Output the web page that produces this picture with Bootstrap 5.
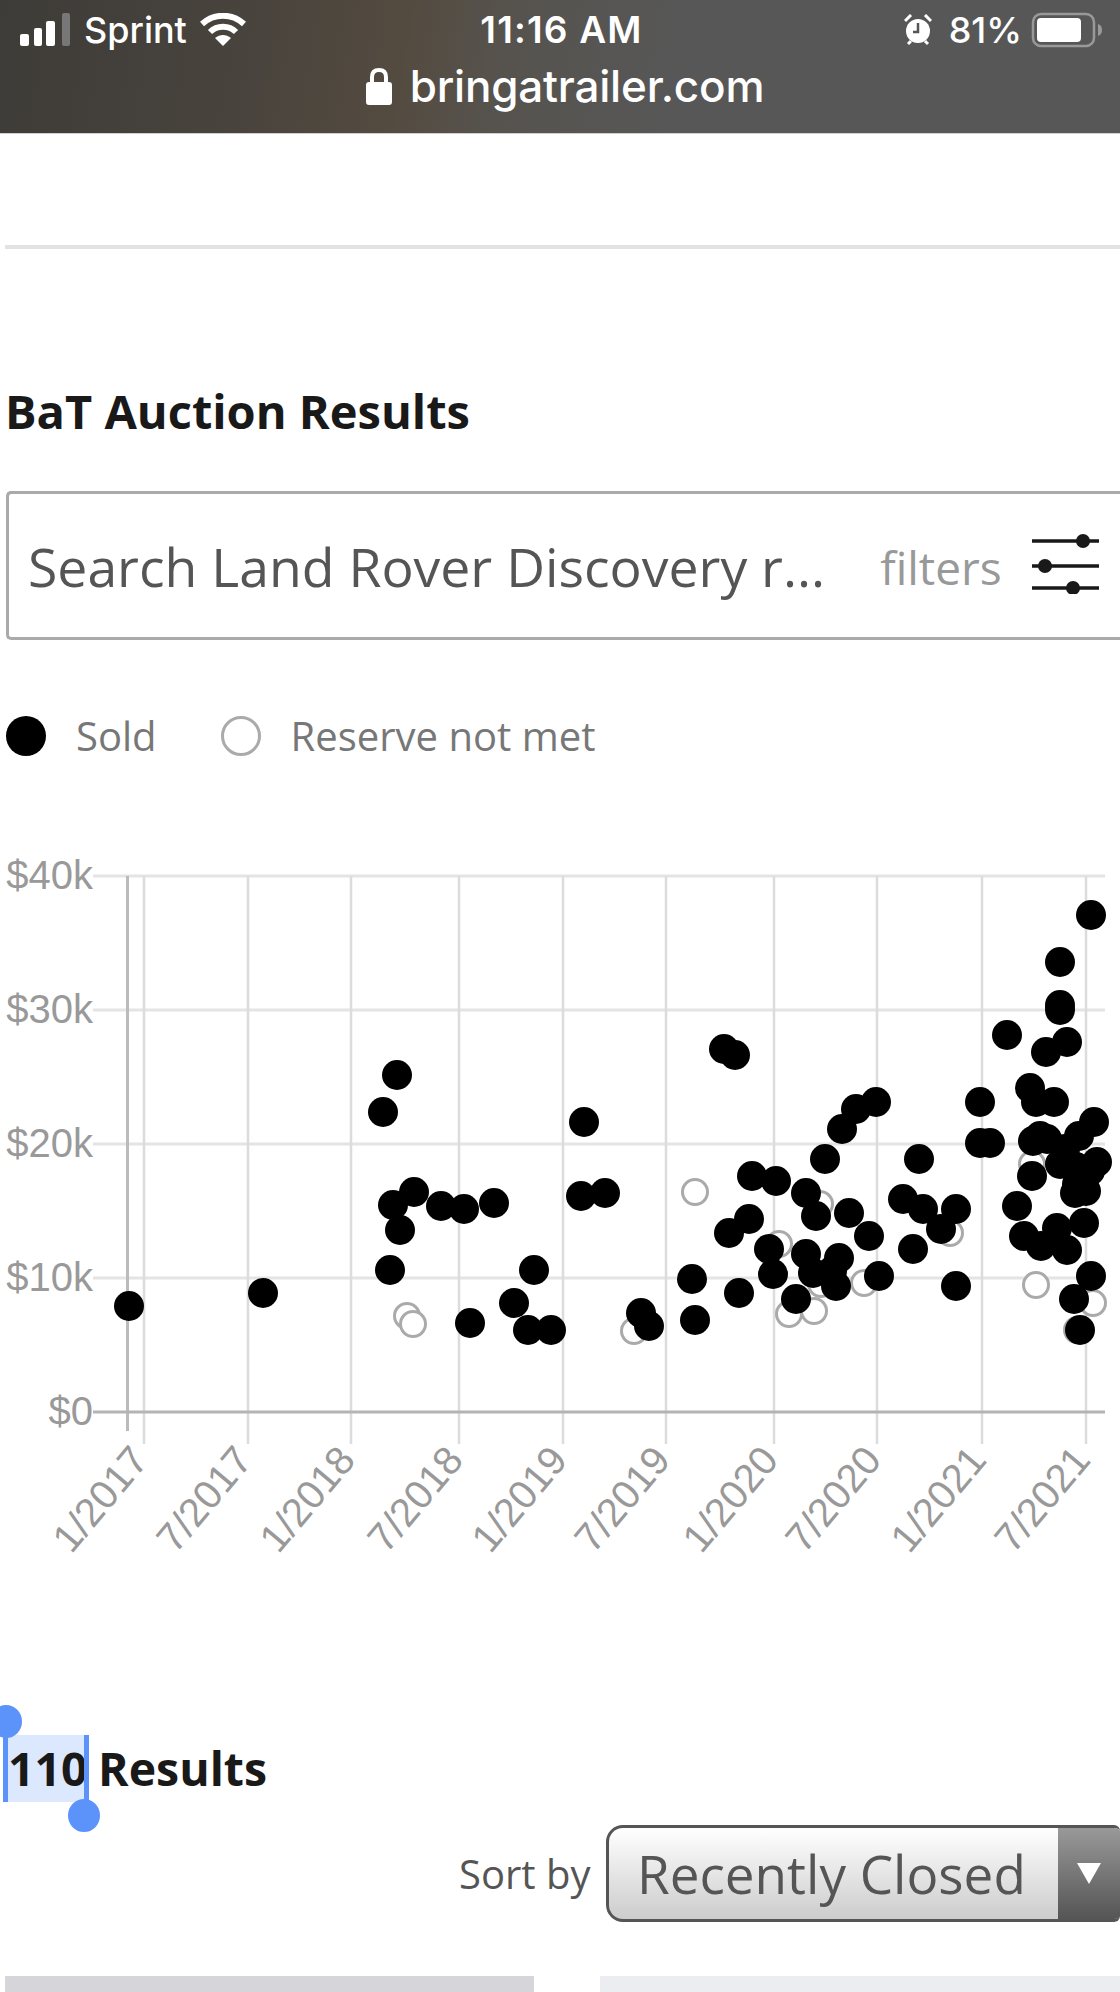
<!DOCTYPE html>
<html lang="en">
<head>
  <meta charset="UTF-8" />
  <title>BaT Auction Results</title>
  <meta name="viewport" content="width=device-width, initial-scale=1">
  <link href="https://cdn.jsdelivr.net/npm/bootstrap@5.3.3/dist/css/bootstrap.min.css" rel="stylesheet">
  <style>
    html, body { margin: 0; height: 1992px; overflow: hidden; background: #fff; }
    body { font-family: "Open Sans", sans-serif; color: #191919; }
    .status-wrap {
      height: 134px;
      color: #fff;
      font-family: Inter, sans-serif;
      background: linear-gradient(100deg, #3e3c38 0%, #48433d 22%, #544b40 36%, #56534e 45%, #575757 60%, #575757 100%);
      border-bottom: 1px solid #cfcfcf;
    }
    .status-top { height: 60px; padding: 12px 17px 0 20px; font-size: 36px; line-height: 36px; font-weight: 500; }
    .status-cell { height: 36px; }
    .carrier { margin-left: 14px; }
    .wifi-ico { margin-left: 13px; }
    .clock { font-weight: 600; font-size: 37px; letter-spacing: 1.2px; }
    .pct { margin: 0 9px 0 17px; }
    .url-row { padding-left: 10px; font-size: 44px; line-height: 52px; font-weight: 500; letter-spacing: -.2px; }
    .url-row svg { margin-right: 18px; }
    .top-rule { height: 4px; margin: 111px 0 0 5px; background: #e2e2e2; }
    .auction-title { margin: 134px 0 0 5px; font-size: 47px; line-height: 56px; font-weight: 700; }
    .search-bar {
      height: 149px; margin: 52px 0 0 6px; padding: 3px 0 0 19px;
      border: 3px solid #aaa; border-right: 0; border-radius: 5px 0 0 5px;
      font-size: 53.5px; color: #555; white-space: nowrap;
    }
    .filter-label { margin-left: 55px; font-size: 46px; color: #999; }
    .filter-ico { margin: 0 0 8px 30px; }
    .legend-row { margin: 75px 0 0 6px; font-size: 40px; line-height: 42px; color: #777; }
    .legend-dot { width: 40px; height: 40px; border-radius: 50%; background: #000; }
    .legend-ring { width: 40px; height: 40px; border-radius: 50%; border: 3px solid #aaa; margin-left: 64px; }
    .legend-text { margin-left: 30px; }
    .chart-box { display: block; margin-top: 88px; }
    .chart-box text { font-family: "Liberation Sans", Arial, sans-serif; font-size: 40px; fill: #999; }
    .results-row { margin: 158px 0 0 8px; font-size: 46.4px; line-height: 67px; font-weight: 700; }
    .sel-words { position: relative; display: inline-block; background: #dce8fd; margin-left: -2px; padding: 0 0 0 2px; width: 80px; }
    .sel-bar { position: absolute; top: 0; width: 5px; height: 67px; background: #5b93fb; }
    .sel-knob { position: absolute; width: 32px; height: 33px; border-radius: 50%; background: #5b93fb; }
    .sort-row { margin-top: 23px; height: 97px; padding-left: 459px; white-space: nowrap; }
    .sort-label { font-size: 40px; color: #555; width: 147px; flex-shrink: 0; }
    .sort-select {
      width: 514px; height: 97px; border: 3px solid #555; border-right: 0; border-radius: 17px 6px 6px 17px; overflow: hidden; flex-shrink: 0;
      font-size: 53px; color: #555; background: linear-gradient(#fff, #ccc);
    }
    .sort-value { width: 449px; padding-left: 28px; flex-shrink: 0; }
    .sort-arrow { flex-grow: 1; height: 100%; padding-left: 19px; background: linear-gradient(#999, #555); }
    .thumb-row { margin: 54px 0 0 5px; height: 17px; gap: 66px; }
    .thumb-a { width: 529px; background: #d6d6da; }
    .thumb-b { flex-grow: 1; background: #ecedf0; }
  </style>
</head>
<body>
  <div class="status-wrap">
    <div class="status-top row g-0">
      <div class="col-4 status-cell d-flex align-items-center">
        <svg width="50" height="34" viewBox="0 0 50 34">
          <rect x="0" y="21" width="9" height="12" rx="2" fill="#fff"/>
          <rect x="14" y="15" width="8" height="18" rx="2" fill="#fff"/>
          <rect x="26" y="8" width="9" height="25" rx="2" fill="#fff"/>
          <rect x="42" y="0" width="8" height="33" rx="2" fill="#777"/>
        </svg>
        <span class="carrier">Sprint</span>
        <svg class="wifi-ico" width="46" height="34" viewBox="0 0 46 34" fill="none" stroke="#fff" stroke-width="6">
          <path d="M2 11C14 0 32 0 44 11"/>
          <path d="M10 19C17 12 29 12 36 19"/>
          <path d="M23 33L15 25C20 21 26 21 31 25Z" fill="#fff" stroke="none"/>
        </svg>
      </div>
      <div class="col-4 status-cell text-center clock">11:16 AM</div>
      <div class="col-4 status-cell d-flex align-items-center justify-content-end">
        <svg width="28" height="32" viewBox="0 0 28 32">
          <circle cx="14" cy="17" r="12" fill="#fff"/>
          <path d="M14 9V18H9" fill="none" stroke="#555" stroke-width="2.5"/>
          <path d="M1 7L7 1M27 7L21 1M4 30L7 27M24 30L21 27" stroke="#fff" stroke-width="3"/>
        </svg>
        <span class="pct">81%</span>
        <svg width="72" height="36" viewBox="0 0 72 36">
          <rect x="2" y="2" width="61" height="32" rx="8" fill="none" stroke="#999" stroke-width="2.5"/>
          <rect x="6" y="6" width="44" height="24" rx="4" fill="#fff"/>
          <path d="M67 12C70 13 71 15 71 18C71 21 70 23 67 24Z" fill="#999"/>
        </svg>
      </div>
    </div>
    <div class="url-row d-flex align-items-center justify-content-center">
      <svg width="26" height="37" viewBox="0 0 26 37">
        <path d="M6 16V9C6 4 9 2 13 2C17 2 20 4 20 9V16" fill="none" stroke="#fff" stroke-width="4"/>
        <rect x="0" y="14" width="26" height="23" rx="3" fill="#fff"/>
      </svg>
      <span>bringatrailer.com</span>
    </div>
  </div>

  <div class="top-rule"></div>
  <h1 class="auction-title">BaT Auction Results</h1>

  <div class="search-bar d-flex align-items-center">
    <span>Search Land Rover Discovery r...</span>
    <span class="filter-label">filters</span>
    <svg class="filter-ico" width="67" height="62" viewBox="0 0 67 62">
      <g stroke="#191919" stroke-width="3.5"><path d="M0 9H67M0 34H67M0 56H67"/></g>
      <g fill="#191919"><circle cx="51" cy="9" r="7"/><circle cx="13" cy="34" r="7"/><circle cx="41" cy="56" r="7"/></g>
    </svg>
  </div>

  <div class="legend-row d-flex align-items-center">
    <span class="legend-dot"></span><span class="legend-text">Sold</span>
    <span class="legend-ring"></span><span class="legend-text">Reserve not met</span>
  </div>

  <svg id="chart" class="chart-box" width="1120" height="732" viewBox="0 844 1120 732"></svg>

  <div class="results-row">
    <span class="sel-words">110
      <span class="sel-bar" style="left:-3px"></span>
      <span class="sel-bar" style="left:78px"></span>
      <span class="sel-knob" style="left:-16px;top:-30px"></span>
      <span class="sel-knob" style="left:62px;top:64px"></span>
    </span> Results
  </div>

  <div class="sort-row d-flex align-items-center">
    <span class="sort-label">Sort by</span>
    <div class="sort-select d-flex align-items-center">
      <span class="sort-value">Recently Closed</span>
      <span class="sort-arrow d-flex align-items-center">
        <svg width="24" height="21" viewBox="0 0 24 21"><path d="M0 0H24L12 21Z" fill="#fff"/></svg>
      </span>
    </div>
  </div>

  <div class="thumb-row d-flex">
    <div class="thumb-a"></div>
    <div class="thumb-b"></div>
  </div>

  <script>
    const NS = 'http://www.w3.org/2000/svg';
    const chart = document.getElementById('chart');

    function add(tag, attrs, text) {
      const el = document.createElementNS(NS, tag);
      for (const k in attrs) el.setAttribute(k, attrs[k]);
      if (text) el.textContent = text;
      chart.appendChild(el);
    }

    // grid
    [[875, '$40k'], [1009, '$30k'], [1143, '$20k'], [1277, '$10k']].forEach(([y, label]) => {
      add('line', { x1: 93, x2: 1105, y1: y, y2: y, stroke: '#e4e4e4', 'stroke-width': 3 });
      add('text', { x: 93, y: y + 13, 'text-anchor': 'end' }, label);
    });
    add('text', { x: 93, y: 1424, 'text-anchor': 'end' }, '$0');

    const ticks = [
      [144, '1/2017'], [248, '7/2017'], [351, '1/2018'], [459, '7/2018'], [563, '1/2019'],
      [666, '7/2019'], [774, '1/2020'], [877, '7/2020'], [982, '1/2021'], [1086, '7/2021']
    ];
    add('line', { x1: 127.5, x2: 127.5, y1: 875, y2: 1430, stroke: '#bbb', 'stroke-width': 3 });
    ticks.forEach(([x, label]) => {
      add('line', { x1: x, x2: x, y1: 875, y2: 1443, stroke: '#dcdcdc', 'stroke-width': 2.5 });
      add('text', { x: x + 6, y: 1460, 'text-anchor': 'end', transform: `rotate(-50 ${x + 6} 1460)` }, label);
    });
    add('line', { x1: 93, x2: 1105, y1: 1411, y2: 1411, stroke: '#b4b4b4', 'stroke-width': 3 });

    // reserve not met
    [[695,1191],[407,1315],[413,1323],[634,1330],[779,1243],[820,1203],[789,1313],[814,1310],[821,1283],
     [864,1282],[950,1232],[1036,1284],[1093,1302],[1077,1329],[1032,1163]].forEach(([x, y]) => {
      add('circle', { cx: x, cy: y, r: 12.5, fill: '#fff', stroke: '#aaa', 'stroke-width': 3 });
    });

    // sold
    [[129,1305],[263,1292],[390,1269],[397,1074],[383,1111],[393,1204],[414,1191],[400,1229],[441,1205],[464,1208],[494,1202],
     [470,1322],[534,1269],[514,1302],[528,1329],[551,1329],[581,1195],[605,1192],[641,1312],[649,1325],
     [692,1278],[695,1319],[739,1292],[729,1232],[749,1218],[752,1175],[776,1180],[806,1192],[816,1215],
     [825,1158],[849,1212],[869,1235],[769,1248],[773,1273],[796,1298],[806,1253],[813,1272],[832,1270],
     [839,1257],[836,1285],[879,1275],[903,1198],[923,1208],[941,1228],[956,1208],[913,1248],[919,1158],
     [956,1285],[1017,1205],[1024,1235],[1041,1245],[1057,1227],[1067,1249],[1084,1222],[1091,1275],
     [1074,1298],[1080,1329],[584,1121],[724,1048],[735,1054],[876,1101],[856,1108],[842,1128],[980,1101],
     [1007,1034],[980,1142],[990,1142],[1030,1087],[1036,1101],[1054,1101],[1046,1051],[1067,1041],
     [1060,1004],[1060,1009],[1060,961],[1091,914],[1033,1140],[1040,1135],[1047,1138],[1094,1121],
     [1079,1135],[1065,1148],[1032,1175],[1060,1163],[1097,1161],[1090,1170],[1076,1166],[1077,1183],
     [1075,1192],[1086,1190]].forEach(([x, y]) => {
      add('circle', { cx: x, cy: y, r: 15, fill: '#000' });
    });
  </script>
  <script src="https://cdn.jsdelivr.net/npm/bootstrap@5.3.3/dist/js/bootstrap.bundle.min.js"></script>
</body>
</html>
